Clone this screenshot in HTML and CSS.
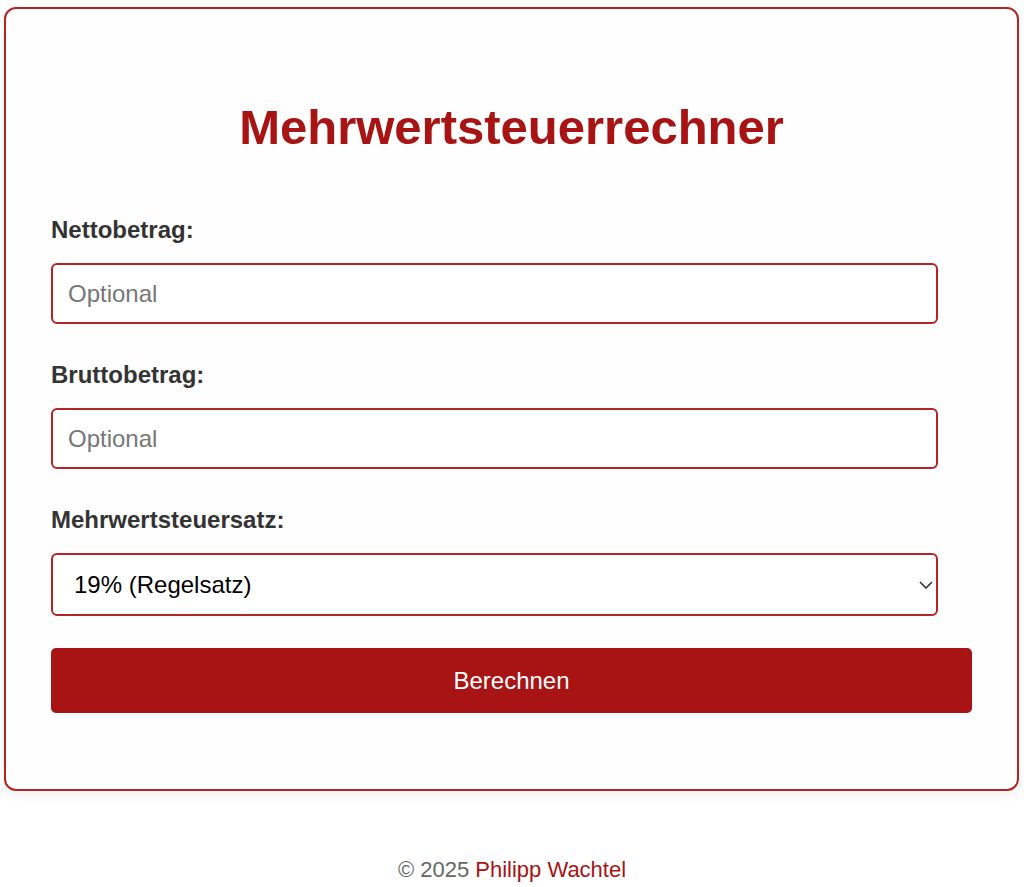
FILE: index.html
```html
<!DOCTYPE html>
<html lang="de">
<head>
    <meta charset="UTF-8">
    <meta name="viewport" content="width=device-width, initial-scale=1.0">
    <title>Mehrwertsteuerrechner</title>
    <link rel="stylesheet" href="styles.css">
</head>
<body>
    <div class="container">
        <h1>Mehrwertsteuerrechner</h1>

        <label for="netto">Nettobetrag:</label>
        <input type="text" id="netto" placeholder="Optional">

        <label for="brutto">Bruttobetrag:</label>
        <input type="text" id="brutto" placeholder="Optional">

        <label for="satz">Mehrwertsteuersatz:</label>
        <div class="select-wrap">
            <select id="satz">
                <option value="19">19% (Regelsatz)</option>
                <option value="7">7% (ermäßigt)</option>
            </select>
            <svg class="chevron" width="14" height="8" viewBox="0 0 14 8">
                <path d="M1 1 L7 7 L13 1" fill="none" stroke="#333" stroke-width="1.6"/>
            </svg>
        </div>

        <button onclick="berechnen()">Berechnen</button>
    </div>

    <footer class="footer">
        © 2025 <a href="#">Philipp Wachtel</a>
    </footer>

    <script>
        function berechnen() {
            const netto = parseFloat(document.getElementById("netto").value.replace(",", "."));
            const brutto = parseFloat(document.getElementById("brutto").value.replace(",", "."));
            const satz = parseFloat(document.getElementById("satz").value) / 100;
            if (!isNaN(netto)) {
                document.getElementById("brutto").value = (netto * (1 + satz)).toFixed(2);
            } else if (!isNaN(brutto)) {
                document.getElementById("netto").value = (brutto / (1 + satz)).toFixed(2);
            }
        }
    </script>
</body>
</html>
```

FILE: styles.css
```css
body {
    margin: 0;
    font-family: "Liberation Sans", Arial, sans-serif;
    background-color: #ffffff;
    color: #333;
}
.container {
    width: 1015px;
    box-sizing: border-box;
    margin: 7px 0 0 4px;
    padding: 90px 45px 76px;
    background: #fefefe;
    border: 2px solid #b42424;
    border-radius: 12px;
    box-shadow: 0 5px 12px rgba(0, 0, 0, 0.06);
}
h1 {
    margin: 0 0 61px;
    font-size: 49px;
    line-height: 56px;
    text-align: center;
    color: #a81414;
}
label {
    display: block;
    margin-bottom: 19px;
    font-size: 24px;
    line-height: 28px;
    font-weight: bold;
    color: #333;
}
input, select {
    display: block;
    box-sizing: border-box;
    width: calc(100% - 34px);
    height: 61px;
    margin: 0 0 37px;
    padding: 0 15px;
    font-family: inherit;
    font-size: 24px;
    color: #000;
    background: #fff;
    border: 2px solid #b42424;
    border-radius: 6px;
    outline: none;
}
input::placeholder {
    color: #777;
}
.select-wrap {
    position: relative;
    width: calc(100% - 34px);
    margin-bottom: 32px;
}
select {
    width: 100%;
    height: 63px;
    margin: 0;
    padding-left: 21px;
    appearance: none;
    -webkit-appearance: none;
}
.chevron {
    position: absolute;
    right: 5px;
    top: 28px;
}
button {
    display: block;
    width: 100%;
    height: 65px;
    font-family: inherit;
    font-size: 24px;
    color: white;
    background-color: #a81414;
    border: none;
    border-radius: 5px;
    cursor: pointer;
}
button:hover {
    background-color: #8c1010;
}
.footer {
    margin-top: 66px;
    text-align: center;
    font-size: 22px;
    line-height: 25px;
    color: #666;
}
.footer a {
    color: #a81414;
    text-decoration: none;
}
```
